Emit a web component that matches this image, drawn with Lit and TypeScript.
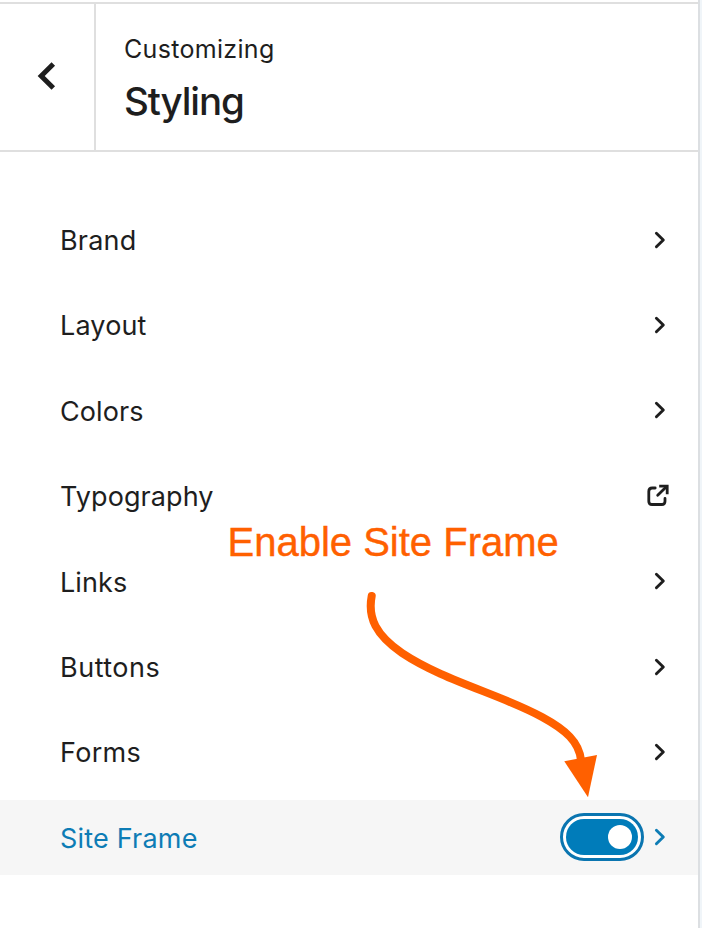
import { LitElement, html, css, svg } from "lit";
import { customElement } from "lit/decorators.js";
import { classMap } from "lit/directives/class-map.js";

interface Item {
  label: string;
  spacing: number;
  kind?: "external" | "toggle";
}

const items: Item[] = [
  { label: "Brand", spacing: 0.2 },
  { label: "Layout", spacing: 0.15 },
  { label: "Colors", spacing: 0.1 },
  { label: "Typography", spacing: 0.08, kind: "external" },
  { label: "Links", spacing: 0.1 },
  { label: "Buttons", spacing: 0.5 },
  { label: "Forms", spacing: 0.3 },
  { label: "Site Frame", spacing: 0.2, kind: "toggle" },
];

const chevron = svg`<path d="M3.4 3.2 L10.3 10 L3.4 16.8" fill="none" stroke="currentColor" stroke-width="2.9" stroke-linecap="round" stroke-linejoin="round" />`;

@customElement("app-root")
export class AppRoot extends LitElement {
  static styles = css`
    :host {
      display: block;
      position: relative;
      box-sizing: border-box;
      width: 702px;
      height: 928px;
      overflow: hidden;
      background: #f0f5f9;
      color: #1e1e1e;
      font-family: Inter, "Liberation Sans", sans-serif;
    }
    .panel {
      box-sizing: border-box;
      width: 700px;
      height: 928px;
      padding-top: 2px;
      background: #fff;
      border-right: 2px solid #dcdfe2;
    }
    header {
      box-sizing: border-box;
      height: 150px;
      display: flex;
      border-top: 2px solid #dfdfdf;
      border-bottom: 2px solid #dfdfdf;
    }
    .back {
      box-sizing: border-box;
      width: 96px;
      padding: 57px 0 0 36px;
      border-right: 2px solid #dfdfdf;
    }
    svg {
      display: block;
    }
    .titles {
      padding: 29px 0 0 28px;
    }
    .eyebrow {
      font-size: 25px;
      line-height: 32px;
      letter-spacing: 0.32px;
    }
    .title {
      margin: 14px 0 0;
      font-size: 38.5px;
      line-height: 44px;
      font-weight: 500;
      letter-spacing: -1.1px;
    }
    .list {
      display: flex;
      flex-direction: column;
      gap: 10.4px;
      padding-top: 50.2px;
    }
    .row {
      box-sizing: border-box;
      height: 75px;
      display: flex;
      align-items: center;
      padding: 0 29px 0 60px;
      font-size: 27px;
    }
    .row.active {
      background: #f6f6f6;
      color: #0d7cb5;
    }
    .label {
      flex: 1;
      padding-top: 1.6px;
      white-space: nowrap;
    }
    .chevron {
      margin-right: 2px;
    }
    .external {
      margin-right: -1px;
    }
    .toggle {
      box-sizing: border-box;
      width: 84px;
      height: 48px;
      margin-right: 9px;
      padding: 3px;
      border: 3px solid #0a75b0;
      border-radius: 24px;
      background: #fff;
    }
    .track {
      box-sizing: border-box;
      height: 36px;
      padding: 6px;
      display: flex;
      justify-content: flex-end;
      border-radius: 18px;
      background: #007cba;
    }
    .knob {
      width: 24px;
      height: 24px;
      border-radius: 50%;
      background: #fff;
    }
    .note {
      position: absolute;
      left: 227.5px;
      top: 518px;
      color: #ff6000;
      font: 40px/48px "Liberation Sans", Arial, sans-serif;
      white-space: nowrap;
      -webkit-text-stroke: 0.4px #ff6000;
    }
    .arrow {
      position: absolute;
      left: 350px;
      top: 580px;
    }
  `;

  private icon(item: Item) {
    if (item.kind === "external") {
      return html`<svg class="external" width="24" height="24" viewBox="0 0 24 24" fill="none" stroke="currentColor" stroke-width="2.8">
        <path d="M9.2 4 H6.2 Q2.8 4 2.8 7.4 V17.2 Q2.8 20.5 6 20.5 H15.8 Q19 20.5 19 17.2 V14.4" stroke-linecap="round" />
        <path d="M11.7 11.3 L20.6 2.6" stroke-linecap="round" />
        <path d="M13.2 2.2 H21.2 V10.2" />
      </svg>`;
    }
    return html`<svg class="chevron" width="14" height="20" viewBox="0 0 14 20">${chevron}</svg>`;
  }

  render() {
    return html`
      <div class="panel">
        <header>
          <div class="back">
            <svg width="22" height="30" viewBox="0 0 22 30">
              <path d="M17.3 3 L5.2 15 L17.3 27" fill="none" stroke="currentColor" stroke-width="5" />
            </svg>
          </div>
          <div class="titles">
            <div class="eyebrow">Customizing</div>
            <h1 class="title">Styling</h1>
          </div>
        </header>
        <nav class="list">
          ${items.map(
            (item) => html`<div class=${classMap({ row: true, active: item.kind === "toggle" })}>
              <span class="label" style="letter-spacing:${item.spacing}px">${item.label}</span>
              ${item.kind === "toggle"
                ? html`<div class="toggle"><div class="track"><div class="knob"></div></div></div>`
                : null}
              ${this.icon(item)}
            </div>`
          )}
        </nav>
      </div>
      <div class="note">Enable Site Frame</div>
      <svg class="arrow" width="260" height="225" viewBox="350 580 260 225">
        <path
          d="M371.7 596 C367.5 618 376 635 402 653 C444 681 500 694 542 717 C566 730 579 742 581 760"
          fill="none" stroke="#ff6000" stroke-width="8" stroke-linecap="round" />
        <path d="M564.3 761.3 L597 755 L588 797.3 Z" fill="#ff6000" />
      </svg>
    `;
  }
}
